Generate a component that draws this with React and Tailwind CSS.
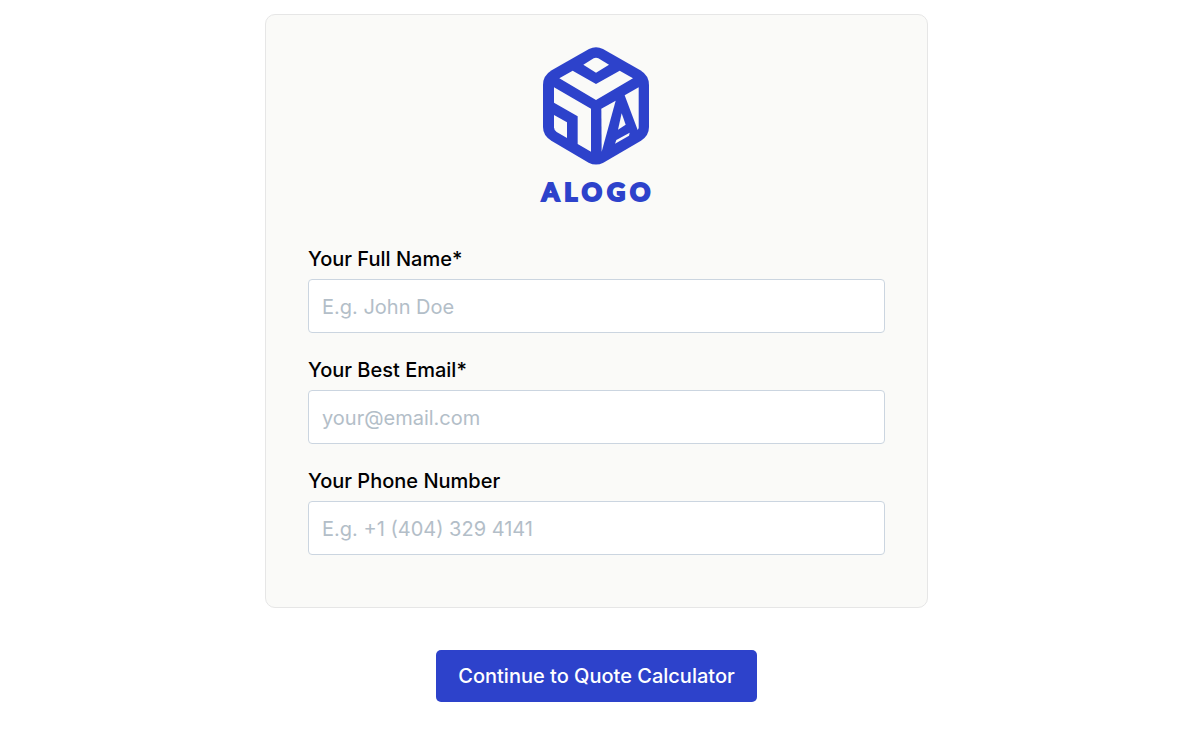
import React, { useState } from 'react'

const fields = [
  { name: 'fullName', label: 'Your Full Name*', type: 'text', placeholder: 'E.g. John Doe', required: true },
  { name: 'email', label: 'Your Best Email*', type: 'email', placeholder: 'your@email.com', required: true },
  { name: 'phone', label: 'Your Phone Number', type: 'tel', placeholder: 'E.g. +1 (404) 329 4141', required: false },
]

const Logo = () => (
  <div className="flex flex-col items-center text-[#2d42cb]">
    <svg className="w-[107px] h-[118px]" viewBox="39 22 321 354" aria-hidden="true">
      {/* cube */}
      <path
        fill="currentColor"
        d="M177 28Q198 18 219 28L331 92Q357 108 357 136V262Q357 288 333 303L220 369Q198 380 176 369L64 303Q39 288 39 262V136Q39 108 65 92Z"
      />
      <g fill="#fafaf8">
        {/* top face */}
        <path d="M191 56Q198 52 205 56L237 75L198 99L160 75Z" />
        <path d="M128 93L198 133L269 93L309 116L198 181L88 116Z" />
        {/* left face */}
        <path d="M72 143L183 207V336L143 313V230L72 189Z" />
        <path d="M72 226L111 248V295L80 277Q72 272 72 263Z" />
        {/* right face */}
        <path d="M214 207L257 183L215 336Z" />
        <path d="M284 167L326 143V263Q326 268 323 271Z" />
        <path d="M275 221L287 255L264 270Z" />
        <path d="M259 301L299 279L297 288L255 312Z" />
      </g>
    </svg>
    <span className="mt-2 pl-1 font-['Lato'] text-[25px] leading-9 font-black tracking-[0.2em] [-webkit-text-stroke:2px_currentColor]">
      ALOGO
    </span>
  </div>
)

const App = () => {
  const [values, setValues] = useState({ fullName: '', email: '', phone: '' })

  const handleChange = (e) => {
    setValues({ ...values, [e.target.name]: e.target.value })
  }

  return (
    <form
      onSubmit={(e) => e.preventDefault()}
      className="flex flex-col items-center pt-[14px] pr-[7px] pb-9 font-['Inter',sans-serif] text-xl text-black"
    >
      <div className="w-full max-w-[663px] rounded-[10px] border border-[#e6e6e6] bg-[#fafaf8] px-[42px] pt-8 pb-[52px]">
        <Logo />
        <div className="mt-9 flex flex-col gap-[23px]">
          {fields.map((field) => (
            <div key={field.name} className="flex flex-col gap-[6px]">
              <label htmlFor={field.name} className="font-medium">{field.label}</label>
              <input
                id={field.name}
                name={field.name}
                type={field.type}
                required={field.required}
                placeholder={field.placeholder}
                value={values[field.name]}
                onChange={handleChange}
                className="h-[54px] w-full rounded border border-[#cbd5e0] bg-white px-[13px] pt-px placeholder:text-[#b3bec8] focus:border-[#2d42cb] focus:outline-none"
              />
            </div>
          ))}
        </div>
      </div>
      <button
        type="submit"
        className="mt-[42px] h-[52px] cursor-pointer rounded-[5px] bg-[#2d42cb] px-[22px] font-medium text-white hover:bg-[#2638b0]"
      >
        Continue to Quote Calculator
      </button>
    </form>
  )
}

export default App
